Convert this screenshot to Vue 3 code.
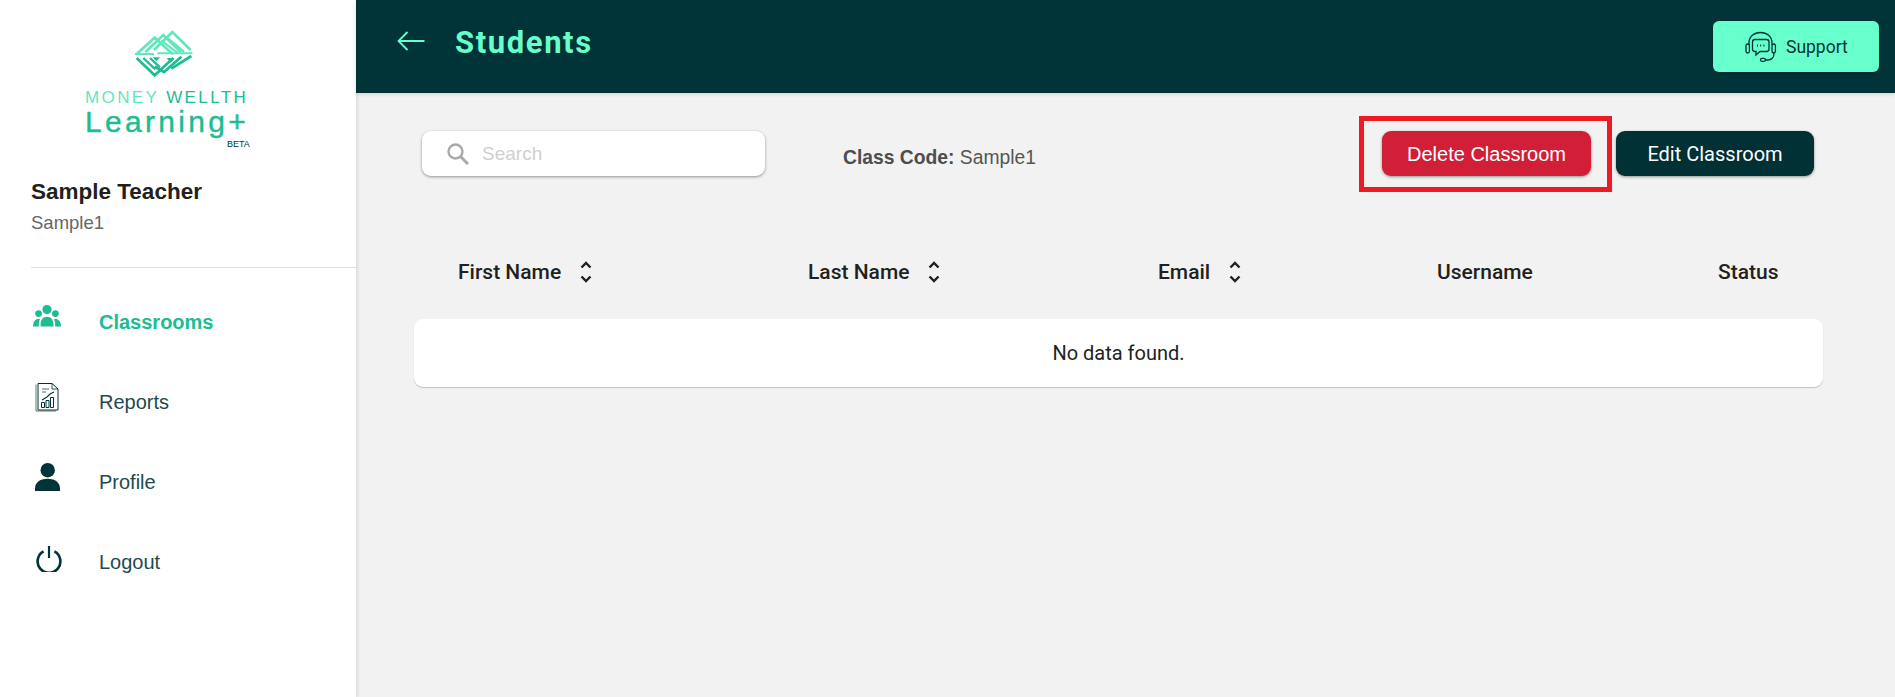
<script setup>
const columns = [
  { label: 'First Name', sortable: true },
  { label: 'Last Name', sortable: true },
  { label: 'Email', sortable: true },
  { label: 'Username', sortable: false },
  { label: 'Status', sortable: false },
]
</script>

<template>
  <div class="app">
    <aside class="sidebar">
      <div class="logo">
        <svg class="logo-mark" viewBox="0 0 180 144" width="60" height="48" fill="none" stroke-linejoin="miter">
          <g stroke="#5fe8bd" stroke-width="8">
            <path d="M8 72 62 23 116 72" />
            <path d="M34 66 88 15 140 66" />
            <path d="M60 60 115 6 170 60" />
            <path d="M82 32 130 68M100 24 150 66" stroke-width="7" />
          </g>
          <path d="M3 72H60M70 70H175" stroke="#5fe8bd" stroke-width="6" />
          <g stroke="#1dbc92" stroke-width="8">
            <path d="M8 84 62 136 118 84" />
            <path d="M62 110 90 126 142 80" />
            <path d="M112 116 172 78" />
            <path d="M28 84 64 118M48 84 78 112" stroke-width="7" />
          </g>
          <path d="M56 82H78L67 94ZM98 84H122L110 98Z" fill="#1dbc92" />
        </svg>
        <div class="logo-line"><span class="light">MONEY</span> <span class="dark">WELLTH</span></div>
        <div class="logo-name">Learning+</div>
        <div class="logo-beta">BETA</div>
      </div>

      <div class="user">
        <div class="user-name">Sample Teacher</div>
        <div class="user-code">Sample1</div>
      </div>

      <nav class="nav">
        <a class="nav-item active">
          <svg class="nav-icon" viewBox="0 0 28 22" width="28" height="22" fill="#1dbc92">
            <circle cx="14" cy="4.6" r="4.6" />
            <circle cx="5.6" cy="8.6" r="3.4" />
            <circle cx="22.4" cy="8.6" r="3.4" />
            <path d="M7.6 21.5v-2.7c0-4.2 2.7-7 6.4-7s6.4 2.8 6.4 7v2.7Z" />
            <path d="M0 21.5c0-3.8 1.5-7 4.6-7.6h2.6c-.8 1.4-1.4 3-1.4 5v2.6ZM28 21.5c0-3.8-1.5-7-4.6-7.6h-2.6c.8 1.4 1.4 3 1.4 5v2.6Z" />
          </svg>
          <span>Classrooms</span>
        </a>
        <a class="nav-item">
          <svg class="nav-icon" viewBox="0 0 24 30" width="24" height="30" fill="none" stroke="#013438">
            <path d="M1 1.5V28H21" stroke-opacity=".65" />
            <path d="M3 .5H17L23 6V27H3Z" stroke-width="1" />
            <path d="M17 .5V6H23" stroke-width=".8" />
            <path d="M7 6H14M7 9H11" stroke-width="1" stroke-opacity=".7" />
            <path d="M7 17 12 14 15 11 19 9" stroke-width="1.1" />
            <path d="M6.5 19.5h3v5h-3ZM11 17.5h3v7h-3ZM15.5 14.5h3v10h-3Z" stroke-width="1" />
          </svg>
          <span>Reports</span>
        </a>
        <a class="nav-item">
          <svg class="nav-icon" viewBox="0 0 25 28" width="25" height="28" fill="#013438">
            <circle cx="12.7" cy="7.2" r="7.2" />
            <path d="M0 28v-2.6C0 20 4.6 15.8 12.5 15.8S25 20 25 25.4V28Z" />
          </svg>
          <span>Profile</span>
        </a>
        <a class="nav-item">
          <svg class="nav-icon" viewBox="0 0 26 26" width="26" height="26" fill="none" stroke="#013438" stroke-width="2.6">
            <path d="M7.6 5.4a11.4 11.4 0 1 0 10.8 0" />
            <path d="M13 0v12" stroke-width="2.2" />
          </svg>
          <span>Logout</span>
        </a>
      </nav>
    </aside>

    <div class="main">
      <header class="topbar">
        <svg class="back" viewBox="0 0 28 20" width="28" height="20" fill="none" stroke="#67ffcb" stroke-width="1.8">
          <path d="M27.5 10H1.5M10.5 1 1.5 10l9 9" />
        </svg>
        <h1 class="title">Students</h1>
        <button class="support">
          <svg viewBox="0 0 32 32" width="32" height="32" fill="none" stroke="#013438" stroke-width="1.3">
            <path d="M4 14V12C4 5.5 9 1.5 15.5 1.5S27 5.5 27 12v2" />
            <rect x="1" y="13" width="3.4" height="9" rx="1.7" />
            <rect x="27" y="13" width="3.4" height="9" rx="1.7" />
            <path d="M10 8.5h11.500a2.500 2.500 0 0 1 2.500 2.500v7a2.500 2.500 0 0 1-2.500 2.500H15l-4 3.500v-3.500H10a2.500 2.500 0 0 1-2.500-2.500v-7A2.500 2.500 0 0 1 10 8.500Z" />
            <path d="M12 14.500h1M15.200 14.500h1M18.400 14.500h1" stroke-width="1.800" />
            <path d="M28.800 22v2c0 3-3 5-6.500 5H20" />
            <rect x="15.500" y="27.300" width="5" height="3" rx="1.500" />
          </svg>
          <span>Support</span>
        </button>
      </header>

      <section class="toolbar">
        <label class="search">
          <svg viewBox="0 0 22 22" width="22" height="22" fill="none" stroke="#a9a9a9">
            <circle cx="8.500" cy="8.500" r="7" stroke-width="2.400" />
            <path d="M13.500 13.500 21 21" stroke-width="3" />
          </svg>
          <input type="text" placeholder="Search" />
        </label>
        <div class="class-code"><b>Class Code:</b> Sample1</div>
        <div class="highlight">
          <button class="btn delete">Delete Classroom</button>
        </div>
        <button class="btn edit">Edit Classroom</button>
      </section>

      <section class="table">
        <div class="thead">
          <div v-for="col in columns" :key="col.label" class="th">
            <span>{{ col.label }}</span>
            <svg v-if="col.sortable" class="sort" viewBox="0 0 12 22" width="12" height="22" fill="none" stroke="#231f20" stroke-width="2.400">
              <path d="M1.500 6.500 6 2l4.500 4.500M1.500 15.500 6 20l4.500-4.500" />
            </svg>
          </div>
        </div>
        <div class="card">No data found.</div>
      </section>
    </div>
  </div>
</template>

<style>
html, body { margin: 0; padding: 0; background: #f2f2f2; }
</style>

<style scoped>
.app {
  display: flex;
  height: 697px;
  overflow: hidden;
  background: #f2f2f2;
  font-family: "Liberation Sans", Arial, sans-serif;
}
.sidebar {
  position: relative;
  flex: 0 0 356px;
  box-sizing: border-box;
  background: #fff;
  box-shadow: 1px 0 4px rgba(0, 0, 0, .14);
}
.logo {
  box-sizing: border-box;
  height: 161px;
  padding: 30px 0 0 85px;
}
.logo-mark { display: block; margin-left: 49px; }
.logo-line {
  margin-top: 10px;
  font-size: 17px;
  line-height: 20px;
  letter-spacing: 2.4px;
  white-space: nowrap;
}
.logo-line .light { color: #5fe8bd; }
.logo-line .dark { color: #1dbc92; }
.logo-name {
  margin-top: -4px;
  font-size: 30px;
  line-height: 36px;
  letter-spacing: 3.3px;
  color: #1dbc92;
  -webkit-text-stroke: .4px #1dbc92;
}
.logo-beta {
  margin: -1.500px 0 0 142px;
  font-size: 9px;
  line-height: 11px;
  color: #013438;
}
.user {
  box-sizing: border-box;
  height: 107px;
  margin-left: 31px;
  padding-top: 17px;
  border-bottom: 1px solid #dedede;
}
.user-name {
  font-size: 22.500px;
  line-height: 28px;
  font-weight: 700;
  color: #231f20;
}
.user-code {
  margin-top: 7px;
  font-size: 18.500px;
  line-height: 20px;
  color: #666;
}
.nav { padding-top: 14px; }
.nav-item {
  position: relative;
  display: flex;
  align-items: center;
  height: 80px;
  padding-left: 99px;
  font-size: 20px;
  color: #1f4a4d;
}
.nav-item.active { color: #1dbc92; font-weight: 700; }
.nav-icon { position: absolute; left: 34px; top: 21px; }
.nav-item:nth-child(1) .nav-icon { left: 33px; top: 23px; }
.nav-item:nth-child(2) .nav-icon { left: 35px; top: 21px; }
.nav-item:nth-child(3) .nav-icon { left: 35px; top: 21px; }
.nav-item:nth-child(4) .nav-icon { left: 36px; top: 24px; }

.main { flex: 1; min-width: 0; }
.topbar {
  position: relative;
  z-index: 2;
  display: flex;
  align-items: center;
  box-sizing: border-box;
  height: 93px;
  padding: 0 16px 12px 41px;
  background: #013438;
  box-shadow: 0 1px 4px rgba(0, 0, 0, .14);
}
.back { flex: none; }
.title {
  margin: 4px 0 0 30px;
  font-family: Roboto, sans-serif;
  font-size: 31px;
  line-height: 36px;
  letter-spacing: 1.600px;
  font-weight: 700;
  color: #67ffcb;
}
.support {
  display: flex;
  align-items: center;
  gap: 9px;
  box-sizing: border-box;
  width: 166px;
  height: 51px;
  margin: 12px 0 0 auto;
  padding: 0 0 0 32px;
  border: 0;
  border-radius: 6px;
  background: #67ffcb;
  color: #013438;
  font-family: Roboto, sans-serif;
  font-size: 17.500px;
  box-shadow: 0 1px 3px rgba(0, 0, 0, .25);
}
.toolbar {
  display: flex;
  align-items: flex-start;
  padding: 23px 81px 0 66px;
}
.search {
  display: flex;
  align-items: center;
  gap: 13px;
  box-sizing: border-box;
  width: 343px;
  height: 45px;
  margin-top: 15px;
  padding: 0 0 0 25px;
  border-radius: 9px;
  background: #fff;
  box-shadow: 0 1px 3px rgba(0, 0, 0, .4);
}
.search input {
  flex: 1;
  min-width: 0;
  padding: 0;
  border: 0;
  outline: 0;
  background: transparent;
  font-family: "Liberation Sans", Arial, sans-serif;
  font-size: 19px;
}
.search input::placeholder { color: #cfcfcf; opacity: 1; }
.class-code {
  margin: 32px 0 0 78px;
  font-size: 19.300px;
  line-height: 20px;
  color: #555;
}
.class-code b { color: #4d4d4d; }
.highlight {
  box-sizing: border-box;
  width: 253px;
  height: 76px;
  margin-left: auto;
  padding: 10px 0 0 18px;
  border: 5px solid #ed1c24;
}
.btn {
  box-sizing: border-box;
  height: 45px;
  border: 0;
  border-radius: 9px;
  font-size: 20px;
  color: #fff;
  box-shadow: 0 1px 3px rgba(0, 0, 0, .4);
}
.delete {
  display: block;
  width: 209px;
  padding: 2px 0 0;
  background: #d01f37;
  font-family: "Liberation Sans", Arial, sans-serif;
}
.edit {
  width: 198px;
  margin: 15px 0 0 4px;
  padding: 0;
  background: #013035;
  font-family: Roboto, sans-serif;
  font-weight: 400;
}
.table { padding: 0 72px 0 58px; }
.thead {
  display: grid;
  grid-template-columns: 350px 350px 279px 281px 1fr;
  align-items: center;
  height: 60px;
  margin-top: 50px;
  padding-left: 44px;
  padding-bottom: 17px;
}
.th {
  display: flex;
  align-items: center;
  gap: 19px;
  font-family: Roboto, sans-serif;
  font-size: 21px;
  font-weight: 500;
  color: #231f20;
  white-space: nowrap;
}
.card {
  display: flex;
  align-items: center;
  justify-content: center;
  height: 68px;
  border-radius: 9px;
  background: #fff;
  box-shadow: 0 1px 1px rgba(0, 0, 0, .2);
  font-family: Roboto, sans-serif;
  font-size: 20px;
  color: #231f20;
}
</style>
